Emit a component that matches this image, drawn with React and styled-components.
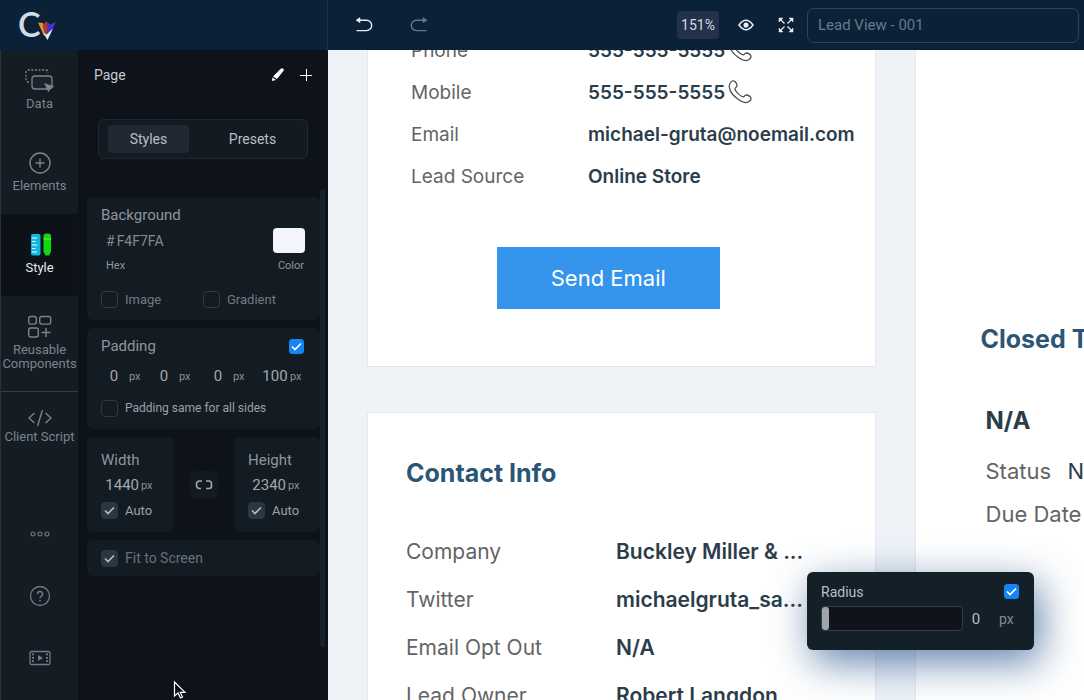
import React, { useState } from 'react';
import styled, { createGlobalStyle } from 'styled-components';

const GlobalStyle = createGlobalStyle`
  * {
    box-sizing: border-box;
  }
  body {
    margin: 0;
    font-family: Roboto, "Liberation Sans", sans-serif;
    background: #0e121a;
  }
  button, input {
    font-family: inherit;
    margin: 0;
  }
  button {
    border: 0;
    padding: 0;
    cursor: pointer;
  }
`;

const Page = styled.div`
  position: relative;
  display: flex;
  flex-direction: column;
  height: 100vh;
  overflow: hidden;
`;

/* top bar */

const TopBar = styled.header`
  display: flex;
  flex: none;
  height: 50px;
  background: #0b2138;
`;

const Brand = styled.a`
  display: flex;
  align-items: center;
  width: 328px;
  padding-left: 18px;
  border-right: 1px solid #1d3349;
`;

const History = styled.div`
  display: flex;
  align-items: center;
  gap: 19px;
  padding-left: 18px;
`;

const ViewTools = styled.div`
  display: flex;
  align-items: center;
  margin-left: auto;
  padding-right: 5px;
`;

const IconButton = styled.button`
  display: flex;
  align-items: center;
  justify-content: center;
  width: ${({ $width }) => $width || 40}px;
  height: 32px;
  background: none;
  color: ${({ $muted }) => ($muted ? '#66788b' : '#e8edf2')};
`;

const ZoomButton = styled.button`
  width: 42px;
  height: 28px;
  margin-right: 7px;
  border-radius: 4px;
  background: #23324a;
  color: #d5dae1;
  font-size: 14px;
`;

const NameInput = styled.input`
  width: 272px;
  height: 35px;
  margin-left: 1px;
  padding: 0 10px;
  border: 1px solid #304458;
  border-radius: 7px;
  outline: none;
  background: transparent;
  color: #6c7987;
  font-size: 15px;
`;

/* left rail */

const Main = styled.div`
  display: flex;
  flex: 1;
  min-height: 0;
`;

const Rail = styled.nav`
  display: flex;
  flex: none;
  flex-direction: column;
  width: 78px;
  border-left: 1px solid #2a323a;
  background: #141c24;
`;

const RailItem = styled.button`
  display: flex;
  flex-direction: column;
  align-items: center;
  gap: ${({ $compact }) => ($compact ? 0 : 4)}px;
  min-height: 82px;
  padding: ${({ $compact }) => ($compact ? 14 : 19)}px 0 20px;
  background: ${({ $active }) => ($active ? '#0d1118' : 'transparent')};
  color: ${({ $active }) => ($active ? '#e6e9ec' : '#7d848c')};
  font-size: 13px;
  line-height: 14px;
`;

const RailDivider = styled.hr`
  width: 100%;
  margin: 0;
  border: 0;
  border-top: 1px solid #343d46;
`;

const RailFooter = styled.div`
  display: flex;
  flex-direction: column;
  margin-top: auto;
  padding-bottom: 11px;
`;

const FooterButton = styled.button`
  display: flex;
  align-items: center;
  justify-content: center;
  height: 62px;
  background: none;
  color: #717984;
`;

/* style panel */

const Panel = styled.aside`
  position: relative;
  display: flex;
  flex: none;
  flex-direction: column;
  width: 250px;
  padding-left: 2px;
  background: #0e121a;
  color: #9ba1a8;
`;

const PanelHeader = styled.div`
  display: flex;
  align-items: center;
  height: 50px;
  padding: 0 8px 0 14px;
`;

const PanelTitle = styled.h2`
  flex: 1;
  margin: 0;
  color: #c3c8cd;
  font-size: 14px;
  font-weight: 400;
`;

const Tabs = styled.div`
  display: grid;
  grid-template-columns: 81px 1fr;
  gap: 18px;
  height: 40px;
  margin: 19px 20px 30px 18px;
  padding: 5px 9px;
  border: 1px solid #212930;
  border-radius: 6px;
  background: #131a21;
`;

const Tab = styled.button`
  border-radius: 4px;
  background: ${({ $active }) => ($active ? '#222833' : 'transparent')};
  color: #b9bec4;
  font-size: 14px;
`;

const PanelScroll = styled.div`
  display: flex;
`;

const Sections = styled.div`
  display: flex;
  flex: 1;
  flex-direction: column;
  gap: 8px;
  padding: 8px 0 0 7px;
`;

const ScrollThumb = styled.div`
  width: 5px;
  height: 458px;
  margin-right: 3px;
  border-radius: 3px;
  background: #18222b;
`;

const Section = styled.section`
  padding: 8px 15px ${({ $tight }) => ($tight ? 8 : 11)}px 14px;
  border-radius: 6px;
  background: #141c23;
`;

const SectionTitle = styled.h3`
  margin: 0;
  color: #8f959c;
  font-size: 15px;
  font-weight: 400;
  line-height: 20px;
`;

const SpacedRow = styled.div`
  display: flex;
  align-items: center;
  justify-content: space-between;
`;

const ColorRow = styled(SpacedRow)`
  height: 31px;
  padding-left: 5px;
`;

const HexField = styled.label`
  display: flex;
  align-items: center;
  gap: 2px;
  color: #838a91;
  font-size: 14px;
`;

const HexInput = styled.input`
  width: 80px;
  padding: 0;
  border: 0;
  outline: none;
  background: transparent;
  color: #838a91;
  font-size: 14px;
`;

const Swatch = styled.input`
  width: 32px;
  height: 25px;
  padding: 0;
  border: 0;
  border-radius: 4px;
  overflow: hidden;
  background: #f4f5fa;
  &::-webkit-color-swatch-wrapper {
    padding: 0;
  }
  &::-webkit-color-swatch {
    border: 0;
  }
`;

const Captions = styled(SpacedRow)`
  padding: 0 1px 0 5px;
  color: #8f959c;
  font-size: 11px;
  line-height: 20px;
`;

const Fills = styled.div`
  display: grid;
  grid-template-columns: 102px 1fr;
  padding-top: 13px;
`;

const optionSizes = { small: 12, normal: 13, large: 14 };

const Option = styled.label`
  display: flex;
  align-items: center;
  gap: 7px;
  height: 20px;
  color: ${({ $tone }) => $tone || '#9ba1a8'};
  font-size: ${({ $size }) => optionSizes[$size || 'normal']}px;
`;

const CheckWrap = styled.span`
  display: inline-grid;
  flex: none;
  place-items: center;
  width: 17px;
  height: 17px;
  svg {
    grid-area: 1 / 1;
    pointer-events: none;
  }
`;

const checkFill = { blue: '#1585f6', slate: '#2b3644', none: 'transparent' };

const CheckInput = styled.input`
  grid-area: 1 / 1;
  width: ${({ $fill }) => ($fill === 'blue' ? 15 : 17)}px;
  height: ${({ $fill }) => ($fill === 'blue' ? 15 : 17)}px;
  border: 1px solid ${({ $fill }) => ($fill === 'none' ? '#303840' : checkFill[$fill])};
  border-radius: ${({ $fill }) => ($fill === 'blue' ? 3 : 4)}px;
  appearance: none;
  background: ${({ $fill }) => checkFill[$fill]};
`;

const PaddingFields = styled.div`
  display: grid;
  grid-template-columns: 50px 54px 57px auto;
  padding: 9px 0 11px;
`;

const Measure = styled.label`
  display: flex;
  align-items: center;
  gap: 2px;
  height: 22px;
  color: #8a9097;
  font-size: 11px;
`;

const MeasureInput = styled.input`
  width: ${({ $wide }) => ($wide ? 38 : 26)}px;
  padding: 0;
  border: 0;
  outline: none;
  background: transparent;
  color: #a3a8ae;
  font-size: 15px;
  text-align: ${({ $wide }) => ($wide ? 'right' : 'center')};
`;

const SizeRow = styled.div`
  display: grid;
  grid-template-columns: 87px 1fr 86px;
  align-items: center;
`;

const SizeCard = styled(Section)`
  display: flex;
  flex-direction: column;
  gap: 4px;
  padding: 13px 0 12px 14px;
`;

const LinkButton = styled.button`
  display: flex;
  align-items: center;
  justify-content: center;
  justify-self: center;
  width: 28px;
  height: 28px;
  border-radius: 6px;
  background: #141a21;
  color: #a3a8ae;
`;

const Pointer = styled.svg`
  position: absolute;
  bottom: 0;
  left: 95px;
`;

/* canvas */

const Canvas = styled.main`
  display: flex;
  flex: 1;
  align-items: stretch;
  gap: 39px;
  min-width: 0;
  padding-left: 39px;
  overflow: hidden;
  background: #eff3f8;
  font-family: Inter, "Liberation Sans", sans-serif;
`;

/* scrolled, so the first rows run under the top bar */
const Column = styled.div`
  display: flex;
  flex: ${({ $grow }) => $grow} 1 0;
  flex-direction: column;
  gap: 45px;
  min-width: 0;
  margin-top: -21px;
  white-space: nowrap;
`;

const LeadCard = styled.article`
  padding: 0 0 57px 43px;
  border: 1px solid #e4e8ee;
  border-top: 0;
  background: #ffffff;
`;

const ContactCard = styled.article`
  padding: 42px 0 40px 38px;
  border: 1px solid #e4e8ee;
  background: #ffffff;
`;

const TaskCard = styled.article`
  flex: 1;
  padding: 292px 0 0 65px;
  border-left: 1px solid #e4e8ee;
  background: #ffffff;
  overflow: hidden;
`;

const CardTitle = styled.h2`
  margin: 0;
  color: #2a5674;
  font-size: 25px;
  font-weight: 700;
  line-height: 36px;
`;

const Fields = styled.dl`
  margin: ${({ $top }) => $top || 0}px 0 0;
`;

const Field = styled.div`
  display: grid;
  grid-template-columns: ${({ $label }) => $label}px 1fr;
  align-items: center;
  height: ${({ $height }) => $height}px;
  font-size: ${({ $size }) => $size}px;
  dt {
    color: #646466;
  }
  dd {
    display: flex;
    align-items: center;
    gap: 3px;
    margin: 0;
    color: #2b3d4b;
    font-weight: ${({ $light }) => ($light ? 400 : 600)};
  }
`;

const SendRow = styled.div`
  display: flex;
  justify-content: center;
  padding: 50px 69px 0 0;
`;

const SendButton = styled.button`
  width: 223px;
  height: 62px;
  background: #3594ec;
  color: #ffffff;
  font-size: 22px;
`;

const TaskBody = styled.dl`
  margin: 0;
  padding: 46px 0 0 5px;
`;

const TaskTitle = styled.h3`
  margin: 0 0 10px;
  color: #2b3d4b;
  font-size: 24px;
  font-weight: 700;
  line-height: 36px;
`;

/* radius popover */

const Popover = styled.div`
  position: absolute;
  right: 50px;
  bottom: 50px;
  width: 227px;
  height: 78px;
  padding: 11px 14px;
  border-radius: 6px;
  background: #142028;
  box-shadow: 6px 12px 40px rgba(32, 77, 135, 0.7);
  color: #b9bec4;
  font-size: 14px;
`;

const RadiusRow = styled.div`
  display: flex;
  align-items: center;
  padding-top: 6px;
`;

const RadiusSlider = styled.input`
  width: 142px;
  height: 25px;
  border: 1px solid #333e48;
  border-radius: 4px;
  appearance: none;
  background: #10131b;
  &::-webkit-slider-thumb {
    width: 7px;
    height: 23px;
    border-radius: 3px;
    appearance: none;
    background: #a0a5ab;
  }
`;

const RadiusValue = styled.input`
  width: 26px;
  padding: 0;
  border: 0;
  outline: none;
  background: transparent;
  color: #b9bec4;
  font-size: 15px;
  text-align: center;
`;

const Unit = styled.span`
  padding-left: 10px;
  color: #838a91;
`;

const Logo = () => (
  <svg width="40" height="40" viewBox="0 0 40 40">
    <text x="0" y="32" fill="#d3dce4" fontFamily="Lato" fontSize="34" fontWeight="600">C</text>
    <path d="M20 17.500l5 .5 2.500 11-1.500 2z" fill="#d9963d" />
    <path d="M24.500 20l4.500-4 1.500 9-2.500 4.500-1.500-1z" fill="#b9372d" />
    <path d="M29.500 17l3 2.500 5.500-3-4 8.500-5 4z" fill="#4d31cc" />
    <path d="M25 27.500l3.500 2 6.500-6-5.500 11.500z" fill="#e8eaf0" />
  </svg>
);

const UndoIcon = ({ flip }) => (
  <svg width="18" height="16" viewBox="0 0 18 16" fill="none" stroke="currentColor" strokeWidth="1.400">
    <g transform={flip ? 'translate(18 0) scale(-1 1)' : undefined}>
      <path d="M2 3.200h9.500a5.200 5.200 0 0 1 0 10.400H1.500" />
      <path d="M1 3.200L5 .6v5.200z" fill="currentColor" strokeWidth="0.500" />
    </g>
  </svg>
);

const EyeIcon = () => (
  <svg width="16" height="12" viewBox="0 0 16 12" fill="none" stroke="currentColor" strokeWidth="1.500">
    <path d="M1 6q7-9.500 14 0q-7 9.500-14 0z" />
    <circle cx="8" cy="6" r="1.800" fill="currentColor" />
  </svg>
);

const ExpandIcon = () => (
  <svg width="16" height="16" viewBox="0 0 16 16" stroke="currentColor" strokeWidth="1.300" fill="none">
    <path d="M2 2l4.500 4.500M14 2L9.500 6.500M2 14l4.500-4.500M14 14L9.500 9.500" />
    <path d="M1 1h4L1 5zM15 1v4l-4-4zM1 15v-4l4 4zM15 15h-4l4-4z" fill="currentColor" strokeWidth="0.500" />
  </svg>
);

const DataIcon = () => (
  <svg width="30" height="24" viewBox="0 0 30 24" fill="none" stroke="currentColor" strokeWidth="1.300">
    <path d="M4 13H3a2 2 0 0 1-2-2V3a2 2 0 0 1 2-2h18a2 2 0 0 1 2 2v1" strokeDasharray="2 1.600" />
    <rect x="7" y="7" width="20" height="13" rx="3" fill="#1c222c" />
    <path d="M19.500 14.500l9.500 3-4 1.500-1.500 4z" fill="currentColor" strokeWidth="0.500" />
  </svg>
);

const ElementsIcon = () => (
  <svg width="24" height="24" viewBox="0 0 24 24" fill="none" stroke="currentColor" strokeWidth="1.400">
    <circle cx="12" cy="12" r="10" />
    <path d="M12 7.500v9M7.500 12h9" />
  </svg>
);

const StyleIcon = () => (
  <svg width="24" height="24" viewBox="0 0 24 24">
    <rect x="3" y="1" width="9.500" height="21.500" rx="2" fill="#0cb9e4" />
    <path d="M4 5h5M4 8.500h3.500M4 12h5M4 15.500h3.500M4 19h5" stroke="#fff" strokeWidth="1.200" />
    <path d="M15.500 3a2.500 2.500 0 0 1 2.500-2.500h2.500A2.500 2.500 0 0 1 23 3v15.500l-2 4h-3.500l-2-4z" fill="#12d80e" />
    <path d="M15.500 6H23" stroke="#6cf060" />
  </svg>
);

const ComponentsIcon = () => (
  <svg width="24" height="24" viewBox="0 0 24 24" fill="none" stroke="currentColor" strokeWidth="1.400">
    <rect x="0.700" y="1.500" width="7.600" height="7.600" rx="2" />
    <rect x="11.700" y="1.500" width="11" height="7.600" rx="2" />
    <rect x="0.700" y="13" width="9.600" height="9" rx="2" />
    <path d="M18 13v9M13.500 17.500h9" />
  </svg>
);

const ScriptIcon = () => (
  <svg width="24" height="24" viewBox="0 0 24 24" fill="none" stroke="currentColor" strokeWidth="1.400">
    <path d="M6.500 7L1 12l5.500 5M17.500 7l5.500 5-5.500 5M14.500 4l-5 16" />
  </svg>
);

const DotsIcon = () => (
  <svg width="20" height="8" viewBox="0 0 20 8" fill="none" stroke="currentColor" strokeWidth="1.200">
    <circle cx="3" cy="4" r="2" />
    <circle cx="10" cy="4" r="2" />
    <circle cx="17" cy="4" r="2" />
  </svg>
);

const HelpIcon = () => (
  <svg width="22" height="22" viewBox="0 0 22 22" fill="none" stroke="currentColor" strokeWidth="1.300">
    <circle cx="11" cy="11" r="9.500" />
    <path d="M8.500 9a2.500 2.500 0 1 1 3.700 2.200q-1.200.7-1.200 2.100M11 15v1.500" strokeWidth="1.500" />
  </svg>
);

const FilmIcon = () => (
  <svg width="22" height="16" viewBox="0 0 22 16" fill="none" stroke="currentColor" strokeWidth="1.300">
    <rect x="1" y="1.500" width="20" height="13" rx="1.500" />
    <path d="M4 3.500v9M18 3.500v9" strokeWidth="2" strokeDasharray="1.800 1.600" />
    <path d="M9 5l5 3-5 3z" fill="currentColor" stroke="none" />
  </svg>
);

const PencilIcon = () => (
  <svg width="14" height="14" viewBox="0 0 14 14" fill="#fff">
    <path d="M8.500 2l1.700-1.500q1-.6 2 .3t.3 2L6 11 2 8.500z" />
    <path d="M1.500 9.500L5 12 .8 13z" />
  </svg>
);

const PlusIcon = () => (
  <svg width="14" height="14" viewBox="0 0 14 14" stroke="#fff" strokeWidth="1">
    <path d="M7.500 1v12M1 7.500h12" />
  </svg>
);

const LinkIcon = () => (
  <svg width="18" height="10" viewBox="0 0 18 10" fill="none" stroke="currentColor" strokeWidth="1.600">
    <path d="M7 1H4.500a3 3 0 0 0-3 3v1.500a3 3 0 0 0 3 3H6M11 1h3a2.500 2.500 0 0 1 2.500 2.500V6A2.500 2.500 0 0 1 14 8.500h-3" />
  </svg>
);

const PhoneIcon = () => (
  <svg width="24" height="24" viewBox="0 0 24 24" fill="none" stroke="#4b4f55" strokeWidth="1.300">
    <path d="M2 3.500Q4-.5 7 1.500q3 3 1.500 5.500-2.500 1.500-1 3.500 2.500 4 6.500 6 2 .8 3-1 2.500-1.500 5.500 1.500 1.500 2.500-1.500 4.500-4.500 3-10.500-2Q3 14.500 1.500 8q-.5-2.500.5-4.500z" />
  </svg>
);

const CheckBox = ({ fill = 'none', label, checked = false }) => {
  const [on, setOn] = useState(checked);
  return (
    <CheckWrap>
      <CheckInput
        type="checkbox"
        aria-label={label}
        checked={on}
        onChange={() => setOn(!on)}
        $fill={on ? fill : 'none'}
      />
      {on && (
        <svg width="11" height="9" viewBox="0 0 11 9" fill="none" stroke={fill === 'blue' ? '#fff' : '#b6bbc1'} strokeWidth="1.700">
          <path d="M1 4.500l3 3L10 1.500" />
        </svg>
      )}
    </CheckWrap>
  );
};

const Size = ({ name, value }) => (
  <SizeCard>
    <SectionTitle>{name}</SectionTitle>
    <Measure>
      <MeasureInput $wide defaultValue={value} aria-label={name} />
      px
    </Measure>
    <Option>
      <CheckBox fill="slate" checked />
      Auto
    </Option>
  </SizeCard>
);

const railItems = [
  ['Data', DataIcon],
  ['Elements', ElementsIcon],
  ['Style', StyleIcon],
  ['Reusable Components', ComponentsIcon],
];

const leadFields = [
  ['Phone', '555-555-5555', true],
  ['Mobile', '555-555-5555', true],
  ['Email', 'michael-gruta@noemail.com'],
  ['Lead Source', 'Online Store'],
];

const contactFields = [
  ['Company', 'Buckley Miller & ...'],
  ['Twitter', 'michaelgruta_sa...'],
  ['Email Opt Out', 'N/A'],
  ['Lead Owner', 'Robert Langdon'],
];

const App = () => {
  const [radius, setRadius] = useState(0);
  const [tab, setTab] = useState('Styles');
  return (
    <Page>
      <GlobalStyle />
      <TopBar>
        <Brand href="#" aria-label="Home"><Logo /></Brand>
        <History>
          <IconButton $width={36} aria-label="Undo"><UndoIcon /></IconButton>
          <IconButton $width={36} $muted aria-label="Redo"><UndoIcon flip /></IconButton>
        </History>
        <ViewTools>
          <ZoomButton>151%</ZoomButton>
          <IconButton aria-label="Preview"><EyeIcon /></IconButton>
          <IconButton aria-label="Full screen"><ExpandIcon /></IconButton>
          <NameInput defaultValue="Lead View - 001" aria-label="View name" />
        </ViewTools>
      </TopBar>

      <Main>
        <Rail>
          {railItems.map(([name, Icon]) => (
            <RailItem key={name} $active={name === 'Style'}>
              <Icon />
              {name}
            </RailItem>
          ))}
          <RailDivider />
          <RailItem $compact>
            <ScriptIcon />
            Client Script
          </RailItem>
          <RailFooter>
            <FooterButton aria-label="More"><DotsIcon /></FooterButton>
            <FooterButton aria-label="Help"><HelpIcon /></FooterButton>
            <FooterButton aria-label="Videos"><FilmIcon /></FooterButton>
          </RailFooter>
        </Rail>

        <Panel>
          <PanelHeader>
            <PanelTitle>Page</PanelTitle>
            <IconButton $width={28} aria-label="Edit"><PencilIcon /></IconButton>
            <IconButton $width={28} aria-label="Add"><PlusIcon /></IconButton>
          </PanelHeader>
          <Tabs>
            {['Styles', 'Presets'].map((name) => (
              <Tab key={name} $active={tab === name} onClick={() => setTab(name)}>{name}</Tab>
            ))}
          </Tabs>
          <PanelScroll>
            <Sections>
              <Section>
                <SectionTitle>Background</SectionTitle>
                <ColorRow>
                  <HexField>
                    #
                    <HexInput id="hex" defaultValue="F4F7FA" />
                  </HexField>
                  <Swatch id="color" type="color" defaultValue="#f4f5fa" />
                </ColorRow>
                <Captions>
                  <label htmlFor="hex">Hex</label>
                  <label htmlFor="color">Color</label>
                </Captions>
                <Fills>
                  <Option $tone="#737a82"><CheckBox />Image</Option>
                  <Option $tone="#737a82"><CheckBox />Gradient</Option>
                </Fills>
              </Section>

              <Section>
                <SpacedRow>
                  <SectionTitle>Padding</SectionTitle>
                  <CheckBox fill="blue" checked label="Padding" />
                </SpacedRow>
                <PaddingFields>
                  {[['top', 0], ['right', 0], ['bottom', 0], ['left', 100]].map(([side, value]) => (
                    <Measure key={side}>
                      <MeasureInput defaultValue={value} aria-label={`Padding ${side}`} />
                      px
                    </Measure>
                  ))}
                </PaddingFields>
                <Option $size="small"><CheckBox />Padding same for all sides</Option>
              </Section>

              <SizeRow>
                <Size name="Width" value="1440" />
                <LinkButton aria-label="Keep proportions"><LinkIcon /></LinkButton>
                <Size name="Height" value="2340" />
              </SizeRow>

              <Section $tight>
                <Option $tone="#66717f" $size="large"><CheckBox fill="slate" checked />Fit to Screen</Option>
              </Section>
            </Sections>
            <ScrollThumb />
          </PanelScroll>
          <Pointer width="14" height="20" viewBox="0 0 14 20" fill="#0b0d12" stroke="#fff" strokeWidth="1.200">
            <path d="M1.500 2v14l3.500-3 2.500 5 2-1-2.300-4.600H12z" />
          </Pointer>
        </Panel>

        <Canvas>
          <Column $grow={3}>
            <LeadCard>
              <Fields>
                {leadFields.map(([name, value, phone]) => (
                  <Field key={name} $label={177} $height={42} $size={19}>
                    <dt>{name}</dt>
                    <dd>{value}{phone && <PhoneIcon />}</dd>
                  </Field>
                ))}
              </Fields>
              <SendRow>
                <SendButton>Send Email</SendButton>
              </SendRow>
            </LeadCard>
            <ContactCard>
              <CardTitle>Contact Info</CardTitle>
              <Fields $top={36}>
                {contactFields.map(([name, value]) => (
                  <Field key={name} $label={210} $height={48} $size={21}>
                    <dt>{name}</dt>
                    <dd>{value}</dd>
                  </Field>
                ))}
              </Fields>
            </ContactCard>
          </Column>
          <Column $grow={1}>
            <TaskCard>
              <CardTitle>Closed Tasks</CardTitle>
              <TaskBody>
                <TaskTitle>N/A</TaskTitle>
                <Field $label={82} $height={43} $size={22} $light><dt>Status</dt><dd>N/A</dd></Field>
                <Field $label={112} $height={43} $size={22} $light><dt>Due Date</dt><dd>N/A</dd></Field>
              </TaskBody>
            </TaskCard>
          </Column>
        </Canvas>
      </Main>

      <Popover>
        <SpacedRow>
          <label htmlFor="radius">Radius</label>
          <CheckBox fill="blue" checked label="Enable radius" />
        </SpacedRow>
        <RadiusRow>
          <RadiusSlider id="radius" type="range" value={radius} onChange={(e) => setRadius(e.target.value)} />
          <RadiusValue value={radius} onChange={(e) => setRadius(e.target.value)} aria-label="Radius value" />
          <Unit>px</Unit>
        </RadiusRow>
      </Popover>
    </Page>
  );
};

export default App;
